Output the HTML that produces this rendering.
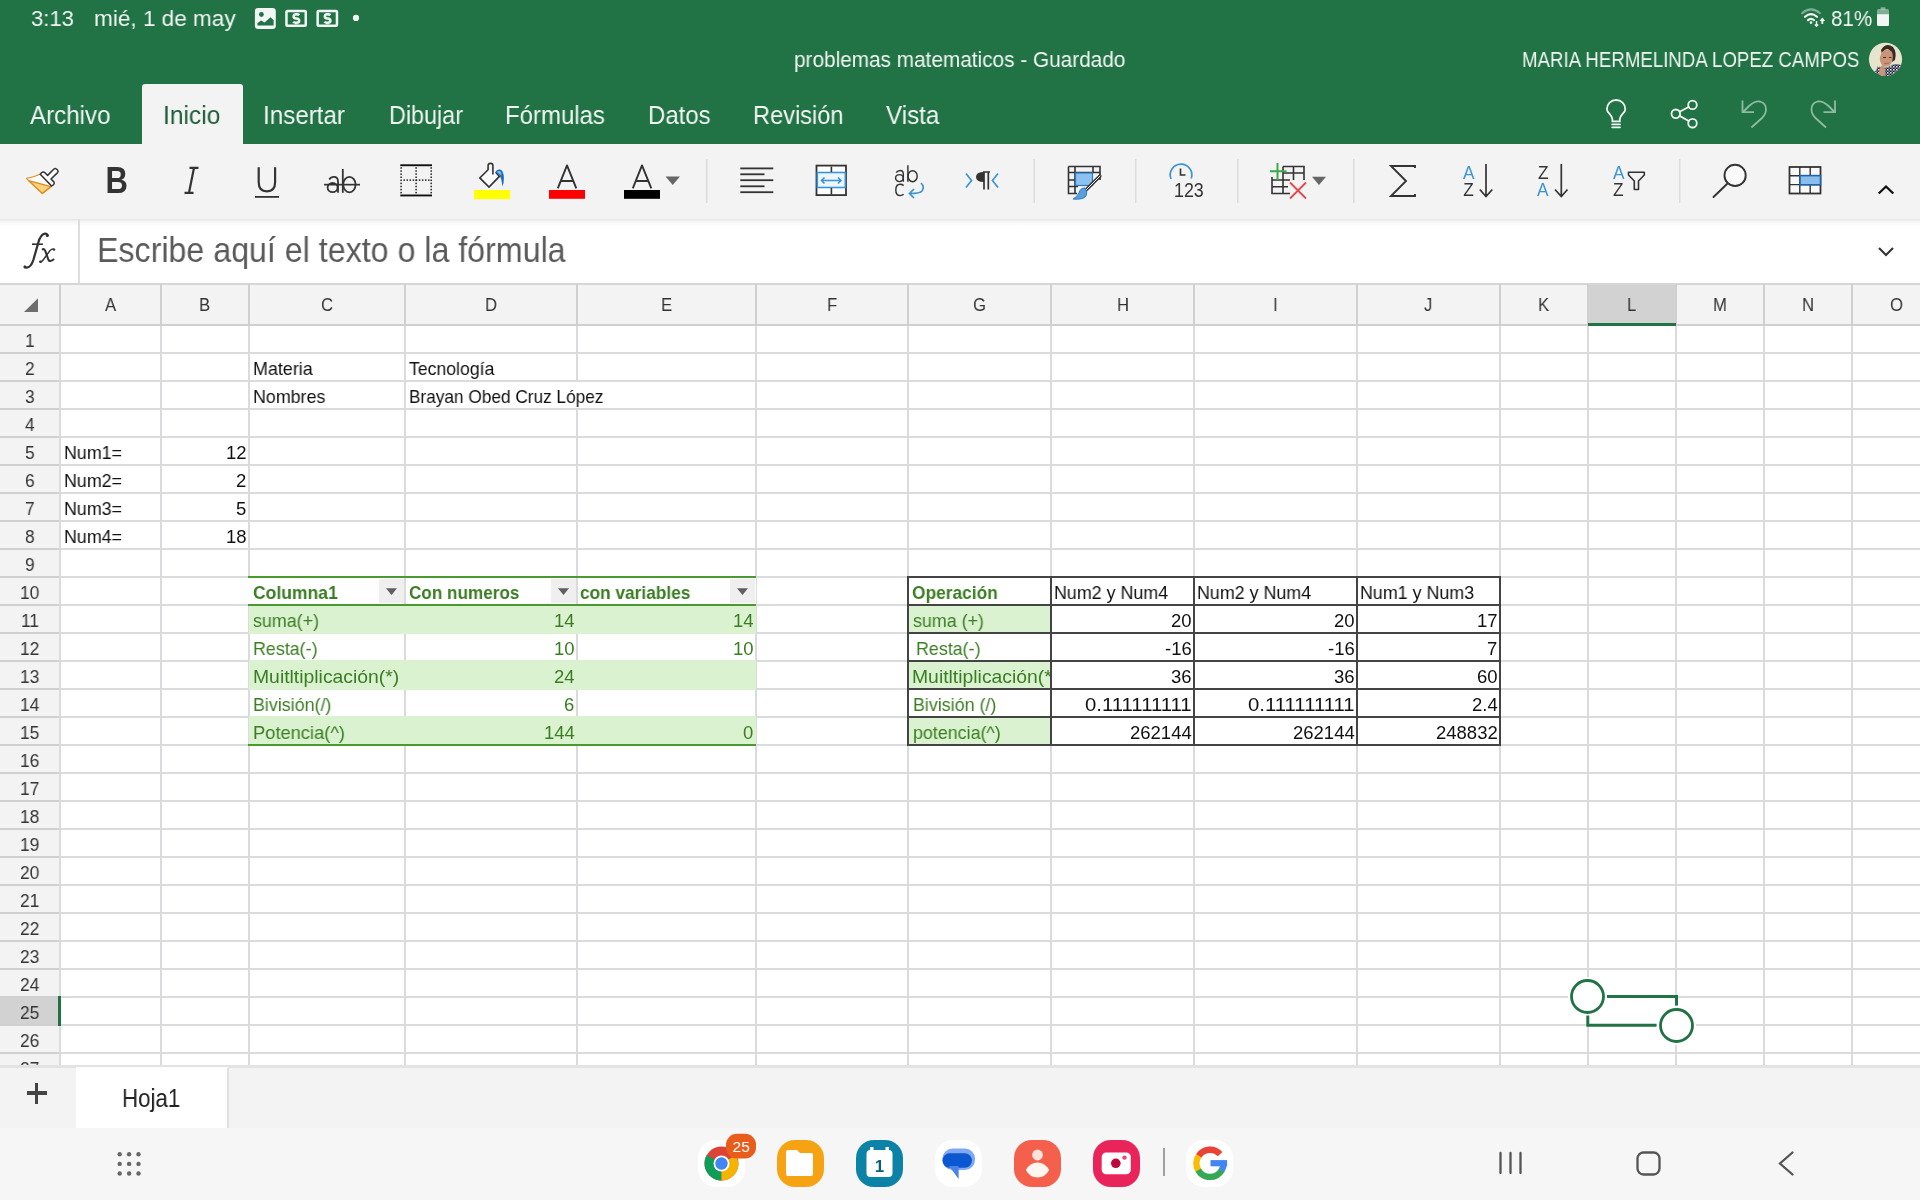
<!DOCTYPE html>
<html><head><meta charset="utf-8"><style>
html,body{margin:0;padding:0;width:1920px;height:1200px;overflow:hidden;background:#fff;}
body{position:relative;font-family:"Liberation Sans",sans-serif;}
.r,.t{position:absolute;}
.t{white-space:nowrap;transform-origin:0 0;will-change:transform;}
svg{will-change:transform;}
</style></head><body>
<div class="r" style="left:0px;top:0px;width:1920px;height:144px;background:#217346;"></div>
<div class="t" style="left:30.70px;top:7.48px;font-size:22.7px;line-height:22.7px;color:#f2f7f3;transform:scaleX(0.9717);">3:13</div>
<div class="t" style="left:93.80px;top:7.48px;font-size:22.7px;line-height:22.7px;color:#f2f7f3;transform:scaleX(0.9940);">mié, 1 de may</div>
<svg class="r" style="left:250px;top:4px" width="120" height="30" viewBox="250 4 120 30">
<rect x="254.9" y="7.9" width="20.9" height="21" rx="3.2" fill="#f2f7f3"/>
<circle cx="261.4" cy="14.5" r="2.4" fill="#217346"/>
<path d="M257.4 25.4 V23.2 L261 20.6 L264.6 22.5 L270.5 17.3 L273.6 20.3 V25.4 Z" fill="#217346"/>
<rect x="286.45" y="11.05" width="19.3" height="14.7" rx=".8" fill="none" stroke="#f2f7f3" stroke-width="2.5"/>
<rect x="317.65" y="11.05" width="19.3" height="14.7" rx=".8" fill="none" stroke="#f2f7f3" stroke-width="2.5"/>
<g fill="none" stroke="#f2f7f3" stroke-width="2.5">
<path d="M299.3 15.2 Q298.5 14.3 296.3 14.3 Q293.6 14.3 293.6 16.4 Q293.6 18.2 296.3 18.5 Q299.2 18.8 299.2 20.7 Q299.2 22.7 296.3 22.7 Q294 22.7 293.2 21.7 M296.3 12.9 V14.3 M296.3 22.7 V24.2"/>
<path d="M330.5 15.2 Q329.7 14.3 327.5 14.3 Q324.8 14.3 324.8 16.4 Q324.8 18.2 327.5 18.5 Q330.4 18.8 330.4 20.7 Q330.4 22.7 327.5 22.7 Q325.2 22.7 324.4 21.7 M327.5 12.9 V14.3 M327.5 22.7 V24.2"/>
</g>
<circle cx="356" cy="17.9" r="3.1" fill="#f2f7f3"/>
</svg>
<svg class="r" style="left:1790px;top:0px" width="130" height="36" viewBox="1790 0 130 36">
<g fill="none" stroke-linecap="round">
<path d="M1802 13.2 Q1811 5.5 1820 13.2" stroke="#f2f7f3" stroke-opacity=".45" stroke-width="2"/>
<path d="M1805 16.8 Q1811 11.5 1817 16.8" stroke="#f2f7f3" stroke-width="2.2"/>
<path d="M1808 20.2 Q1811 17.6 1814 20.2" stroke="#f2f7f3" stroke-width="2.2"/>
</g>
<circle cx="1811" cy="22.6" r="1.3" fill="#f2f7f3"/>
<path d="M1816.5 21 V26.3 M1814.8 24.5 L1816.5 26.3 L1818.2 24.5" fill="none" stroke="#f2f7f3" stroke-width="1.4"/>
<path d="M1822.3 24 V19 M1820.4 21 L1822.3 18.8 L1824.2 21" fill="none" stroke="#f2f7f3" stroke-width="1.8"/>
<rect x="1877" y="9" width="12" height="17" rx="1.6" fill="#f2f7f3" fill-opacity=".45"/>
<rect x="1880.5" y="7.2" width="5" height="2.5" rx=".8" fill="#f2f7f3" fill-opacity=".45"/>
<path d="M1877 14.2 H1889 V24.4 Q1889 26 1887.4 26 H1878.6 Q1877 26 1877 24.4Z" fill="#f2f7f3"/>
</svg>
<div class="t" style="left:1830.80px;top:7.38px;font-size:22.7px;line-height:22.7px;color:#f2f7f3;transform:scaleX(0.9075);">81%</div>
<div class="t" style="left:793.60px;top:48.50px;font-size:21.8px;line-height:21.8px;color:#f2f7f3;transform:scaleX(0.9531);">problemas matematicos - Guardado</div>
<div class="t" style="left:1521.50px;top:49.78px;font-size:21.4px;line-height:21.4px;color:#f2f7f3;transform:scaleX(0.8733);">MARIA HERMELINDA LOPEZ CAMPOS</div>
<svg class="r" style="left:1868px;top:42px" width="36" height="36" viewBox="1868 42 36 36">
<defs><clipPath id="av"><circle cx="1885.5" cy="59.3" r="16.6"/></clipPath>
<pattern id="shirt" width="3" height="3" patternUnits="userSpaceOnUse"><rect width="3" height="3" fill="#1f2338"/><rect x="0" y="0" width="1.5" height="1.5" fill="#e8ecf2"/><rect x="1.5" y="1.5" width="1.2" height="1.2" fill="#c9d0de"/></pattern></defs>
<g clip-path="url(#av)">
<rect x="1868" y="42" width="36" height="36" fill="#e4e5cc"/>
<path d="M1881 50 Q1886 42 1893 47 Q1897 52 1895 60 L1892 62 Q1893 52 1888 49 Q1884 49 1882 54Z" fill="#3a2a22"/>
<path d="M1882 52 Q1888 47 1892 52 Q1894 58 1891 64 Q1887 68 1883 66 Q1879 62 1880 57Z" fill="#c99478"/>
<path d="M1883 57.5 H1886 M1889 57.5 H1891.5" stroke="#4a2e25" stroke-width="1.2"/>
<path d="M1884 63 Q1886.5 64.5 1889 63" stroke="#b0605a" stroke-width="1" fill="none"/>
<path d="M1872 78 L1878 66 Q1884 69 1890 66 Q1896 62 1903 66 L1904 78Z" fill="url(#shirt)"/>
<path d="M1879 78 Q1878 70 1882 65 Q1886 66 1885 78Z" fill="#c99478"/>
</g></svg>
<div class="r" style="left:142px;top:84px;width:101px;height:60px;background:#f3f3f3;border-radius:3px 3px 0 0;"></div>
<div class="t" style="left:29.50px;top:102.61px;font-size:25.8px;line-height:25.8px;color:#f2f7f3;transform:scaleX(0.9356);">Archivo</div>
<div class="t" style="left:162.75px;top:102.61px;font-size:25.8px;line-height:25.8px;color:#1d5c37;transform:scaleX(0.9503);">Inicio</div>
<div class="t" style="left:263.00px;top:102.61px;font-size:25.8px;line-height:25.8px;color:#f2f7f3;transform:scaleX(0.9376);">Insertar</div>
<div class="t" style="left:388.50px;top:102.61px;font-size:25.8px;line-height:25.8px;color:#f2f7f3;transform:scaleX(0.9048);">Dibujar</div>
<div class="t" style="left:505.00px;top:102.61px;font-size:25.8px;line-height:25.8px;color:#f2f7f3;transform:scaleX(0.9295);">Fórmulas</div>
<div class="t" style="left:647.50px;top:102.61px;font-size:25.8px;line-height:25.8px;color:#f2f7f3;transform:scaleX(0.9282);">Datos</div>
<div class="t" style="left:752.50px;top:102.61px;font-size:25.8px;line-height:25.8px;color:#f2f7f3;transform:scaleX(0.9147);">Revisión</div>
<div class="t" style="left:885.50px;top:102.61px;font-size:25.8px;line-height:25.8px;color:#f2f7f3;transform:scaleX(0.9383);">Vista</div>
<svg class="r" style="left:1590px;top:85px" width="260" height="55" viewBox="1590 85 260 55">
<g fill="none" stroke="#f2f7f3" stroke-width="1.8" stroke-linecap="round">
<path d="M1612.4 121.3 V119.2 Q1612.1 116.6 1609.6 113.9 Q1606.9 111.2 1606.9 109.2 A9.2 9.2 0 0 1 1625.3 109.2 Q1625.3 111.2 1622.6 113.9 Q1620.1 116.6 1619.8 119.2 V121.3 Z"/>
<path d="M1612.2 124.4 H1620 M1612.2 127.3 H1620"/>
<circle cx="1692.5" cy="104.9" r="4.3"/><circle cx="1675.8" cy="113.8" r="4.3"/><circle cx="1692.5" cy="123.2" r="4.3"/>
<path d="M1679.6 111.7 L1688.7 107 M1679.6 115.9 L1688.7 121"/>
</g>
<g fill="none" stroke="#8fbba0" stroke-width="1.8">
<path d="M1742.5 100.6 V112.2 H1754"/>
<path d="M1743 112 L1749 106 Q1755 100.6 1760 101.5 Q1766 103 1766 109.5 Q1766 114 1762 118 L1751.4 127.5"/>
<path d="M1835 100.6 V112.2 H1823.5"/>
<path d="M1834.5 112 L1828.5 106 Q1822.5 100.6 1817.5 101.5 Q1811.5 103 1811.5 109.5 Q1811.5 114 1815.5 118 L1826 127.5"/>
</g></svg>
<div class="r" style="left:0px;top:144px;width:1920px;height:75px;background:#f3f3f3;"></div>
<div class="r" style="left:0px;top:219px;width:1920px;height:65px;background:#ffffff;"></div>
<div class="r" style="left:0px;top:219px;width:1920px;height:7px;background:linear-gradient(#e4e4e4,#f6f6f6 40%,#ffffff);"></div>
<div class="r" style="left:78px;top:219px;width:2px;height:65px;background:#dedede;"></div>
<svg class="r" style="left:0px;top:144px" width="1920" height="76" viewBox="0 144 1920 76">
<!-- format painter -->
<path d="M26.5 178.3 Q35 176.8 40.3 174 L51.7 185.9 L42.4 193.4 Z" fill="#fff" stroke="#e08a1e" stroke-width="1.1" stroke-linejoin="round"/>
<path d="M28.5 180.6 L51 186.6 L42.4 193.4 Z" fill="#fcd27e" stroke="#e08a1e" stroke-width="1.4" stroke-linejoin="round"/>
<path d="M40.3 174.2 Q41.3 172.4 42.9 172 Q44 171.9 44.9 172.8 L47.6 175.4 L54 169 Q55.2 168 56.4 169 L57.7 170.3 Q58.6 171.5 57.6 172.6 L51 179 L53.6 181.6 Q54.7 182.8 53.9 184.2 Q53 185.6 51.6 185.9 Z" fill="#fff" stroke="#333333" stroke-width="1.5" stroke-linejoin="round"/>
<!-- B I U ab -->
<text x="105.6" y="193" font-family="Liberation Sans" font-weight="bold" font-size="37.4" fill="#333333" transform="translate(105.6 0) scale(0.83 1) translate(-105.6 0)">B</text>
<path d="M189.5 167.8 H198.5 M184.5 192.8 H193.5 M194 167.8 L189 192.8" fill="none" stroke="#333333" stroke-width="2.2"/>
<path d="M258.7 167.3 V182.3 Q258.7 191.3 266.9 191.3 Q275.1 191.3 275.1 182.3 V167.3" fill="none" stroke="#333333" stroke-width="2.2"/>
<rect x="255" y="196" width="24" height="1.8" fill="#333333"/>
<g fill="none" stroke="#333333" stroke-width="1.8">
<path d="M329.2 179.5 Q330.8 176.9 334 176.9 Q338 176.9 338 181.5 V192.8"/>
<ellipse cx="332.6" cy="187.6" rx="5" ry="4.6"/>
<path d="M342.8 169 V192.8"/>
<ellipse cx="349.4" cy="184.6" rx="6.2" ry="7.7"/>
</g>
<rect x="324.1" y="183.8" width="35.9" height="1.7" fill="#333333"/>
<!-- borders -->
<rect x="400.3" y="164.3" width="31.7" height="1.9" fill="#111"/>
<rect x="400.3" y="194.5" width="31.7" height="1.9" fill="#111"/>
<g fill="#222"><rect x="400.35" y="167.25" width="1.5" height="1.5"/><rect x="400.35" y="170.33" width="1.5" height="1.5"/><rect x="400.35" y="173.41" width="1.5" height="1.5"/><rect x="400.35" y="176.49" width="1.5" height="1.5"/><rect x="400.35" y="179.57" width="1.5" height="1.5"/><rect x="400.35" y="182.65" width="1.5" height="1.5"/><rect x="400.35" y="185.73" width="1.5" height="1.5"/><rect x="400.35" y="188.81" width="1.5" height="1.5"/><rect x="400.35" y="191.89" width="1.5" height="1.5"/><rect x="415.35" y="167.25" width="1.5" height="1.5"/><rect x="415.35" y="170.33" width="1.5" height="1.5"/><rect x="415.35" y="173.41" width="1.5" height="1.5"/><rect x="415.35" y="176.49" width="1.5" height="1.5"/><rect x="415.35" y="179.57" width="1.5" height="1.5"/><rect x="415.35" y="182.65" width="1.5" height="1.5"/><rect x="415.35" y="185.73" width="1.5" height="1.5"/><rect x="415.35" y="188.81" width="1.5" height="1.5"/><rect x="415.35" y="191.89" width="1.5" height="1.5"/><rect x="430.45" y="167.25" width="1.5" height="1.5"/><rect x="430.45" y="170.33" width="1.5" height="1.5"/><rect x="430.45" y="173.41" width="1.5" height="1.5"/><rect x="430.45" y="176.49" width="1.5" height="1.5"/><rect x="430.45" y="179.57" width="1.5" height="1.5"/><rect x="430.45" y="182.65" width="1.5" height="1.5"/><rect x="430.45" y="185.73" width="1.5" height="1.5"/><rect x="430.45" y="188.81" width="1.5" height="1.5"/><rect x="430.45" y="191.89" width="1.5" height="1.5"/><rect x="403.43" y="179.35" width="1.5" height="1.5"/><rect x="406.51" y="179.35" width="1.5" height="1.5"/><rect x="409.59" y="179.35" width="1.5" height="1.5"/><rect x="412.67" y="179.35" width="1.5" height="1.5"/><rect x="415.75" y="179.35" width="1.5" height="1.5"/><rect x="418.83" y="179.35" width="1.5" height="1.5"/><rect x="421.91" y="179.35" width="1.5" height="1.5"/><rect x="424.99" y="179.35" width="1.5" height="1.5"/><rect x="428.07" y="179.35" width="1.5" height="1.5"/></g>
<!-- fill color -->
<path d="M488.1 169.8 L479.8 177.9 L489 187 L499.4 176.4 L495.6 172.3" fill="#fafafa" stroke="#333333" stroke-width="1.6" stroke-linejoin="miter"/>
<path d="M488.1 170 V165.6 Q488.1 163.4 490.5 163.4 Q492.9 163.4 492.9 165.6 V174.6" fill="none" stroke="#333333" stroke-width="1.6"/>
<path d="M495.3 172 Q497.2 168.8 500.2 169.6 Q503.6 170.8 503.9 178 Q504 183 502.4 186.5 Q501.6 178.5 499.6 175.5 Z" fill="#1e6cb8"/>
<path d="M496.8 172 Q498.8 170.6 500.5 171.4 Q502 172.5 501.3 175.6 Q499.8 174 496.8 172Z" fill="#7cbcf2"/>
<rect x="474" y="190" width="36.2" height="9.2" fill="#ffff00"/>
<!-- font color A -->
<path d="M557.8 188.3 L567 165.4 L576.3 188.3 M560.5 181 H573.5" fill="none" stroke="#333333" stroke-width="1.9" stroke-linejoin="round"/>
<rect x="549" y="190" width="36" height="8.8" fill="#ff0000"/>
<path d="M632.8 188.3 L642 165.4 L651.3 188.3 M635.5 181 H648.5" fill="none" stroke="#333333" stroke-width="1.9" stroke-linejoin="round"/>
<rect x="624" y="190" width="36" height="8.8" fill="#000"/>
<path d="M665.5 176.6 H680 L672.75 185 Z" fill="#666"/>
<!-- separators -->
<g fill="#dcdcdc">
<rect x="706" y="159" width="1.5" height="44"/><rect x="1033.5" y="159" width="1.5" height="44"/>
<rect x="1135" y="159" width="1.5" height="44"/><rect x="1237" y="159" width="1.5" height="44"/>
<rect x="1353" y="159" width="1.5" height="44"/><rect x="1679" y="159" width="1.5" height="44"/>
</g>
<!-- align left -->
<g fill="#333333">
<rect x="740.3" y="167.5" width="33" height="1.8"/><rect x="740.3" y="173.4" width="24.2" height="1.8"/>
<rect x="740.3" y="179.3" width="33" height="1.8"/><rect x="740.3" y="185.4" width="24.2" height="1.8"/>
<rect x="740.3" y="191.3" width="33" height="1.8"/>
</g>
<!-- merge -->
<rect x="816.5" y="165.6" width="29.5" height="29.5" fill="#fff" stroke="#333333" stroke-width="1.8"/>
<rect x="817.3" y="172.5" width="28" height="15" fill="#eef6fd" stroke="#3a94d6" stroke-width="1.6"/>
<path d="M831.4 166.5 V172 M831.4 188 V194.5" stroke="#333333" stroke-width="1.6"/>
<path d="M821.5 180.5 H841 M824.5 177.5 L821.5 180.5 L824.5 183.5 M838 177.5 L841 180.5 L838 183.5" fill="none" stroke="#3a94d6" stroke-width="1.6"/>
<!-- wrap -->
<g fill="none" stroke="#333333" stroke-width="1.45">
<path d="M896.2 172.6 Q897.6 170.4 900.2 170.4 Q903.3 170.4 903.3 174 V181.7"/>
<ellipse cx="899.4" cy="178.1" rx="3.8" ry="3.5"/>
<path d="M907.9 165.2 V181.7"/>
<ellipse cx="912.6" cy="176.2" rx="4.6" ry="5.5"/>
<path d="M903.6 185.6 Q902.2 184.3 900.2 184.3 Q895.8 184.3 895.8 190 Q895.8 195.6 900.2 195.6 Q902.2 195.6 903.6 194.3"/>
</g>
<path d="M921 183 Q925 187 922 191 Q920 193.5 910 193.5 M914 189 L909.5 193.5 L914 198" fill="none" stroke="#3a94d6" stroke-width="1.7"/>
<!-- rtl -->
<path d="M966 173.5 L971.5 180.5 L966 187.5 M998 173.5 L992.5 180.5 L998 187.5" fill="none" stroke="#3a94d6" stroke-width="1.7"/>
<path d="M983 172 H990 M984 172 V189.5 M988.3 172 V189.5" fill="none" stroke="#333333" stroke-width="1.7"/>
<path d="M984 172 Q976 172 976 177 Q976 182 984 182Z" fill="#333333"/>
<!-- conditional formatting -->
<g fill="none" stroke="#333333" stroke-width="1.6">
<path d="M1068.5 166.5 H1100 V180 M1068.5 166.5 V193.5 H1077 M1068.5 172.5 H1100 M1068.5 180 H1093 M1068.5 186.5 H1078 M1075 166.5 V193.5 M1093 166.5 V172.5"/>
</g>
<rect x="1075.5" y="173" width="17" height="12.5" fill="#8cc1f0" stroke="#2a7bc4" stroke-width="1.2"/>
<path d="M1100 176 L1086 190" stroke="#333333" stroke-width="3.2" stroke-linecap="round"/>
<path d="M1100 176 L1086 190" stroke="#f3f3f3" stroke-width="1" stroke-linecap="round"/>
<path d="M1085 188 Q1080 188 1079 193 Q1077 197 1073 199 Q1083 200 1086 196 Q1088 192 1085 188Z" fill="#5a9fdc" stroke="#2a7bc4" stroke-width="1"/>
<!-- number format -->
<path d="M1171 179 A10.8 10.8 0 1 1 1191.2 178.5" fill="none" stroke="#3a94d6" stroke-width="1.7"/>
<path d="M1180.5 168.5 V175 H1185.5" fill="none" stroke="#333333" stroke-width="1.6"/>
<text x="1174" y="197" font-family="Liberation Sans" font-size="21" fill="#333333" transform="translate(1174 0) scale(0.85 1) translate(-1174 0)">123</text>
<!-- insert delete -->
<g fill="none" stroke="#333333" stroke-width="1.6">
<path d="M1283 166.5 H1304 V180 M1272 177 V193.5 H1290 M1272 180 H1290 M1283 166.5 V193.5 M1293.5 166.5 V180 M1283 173 H1304 M1272 186.8 H1288"/>
</g>
<path d="M1277.5 163 V180 M1270 171.3 H1286.5" stroke="#3ba94c" stroke-width="2"/>
<path d="M1290 182.5 L1306 198.5 M1306 182.5 L1290 198.5" stroke="#e04a4a" stroke-width="1.8"/>
<path d="M1312 176.7 H1326 L1319 185 Z" fill="#666"/>
<!-- sigma -->
<path d="M1415 168 V166 H1391 L1406 181 L1391 196 H1415 V194" fill="none" stroke="#333333" stroke-width="1.9"/>
<!-- sort AZ -->
<text x="1463" y="179" font-family="Liberation Sans" font-size="18" fill="#3a94d6" transform="translate(1463 0) scale(0.96 1) translate(-1463 0)">A</text>
<text x="1463.3" y="196" font-family="Liberation Sans" font-size="18" fill="#333333" transform="translate(1463 0) scale(0.96 1) translate(-1463 0)">Z</text>
<path d="M1486 164 V196 M1479.8 189.5 L1486 196.5 L1492.3 189.5" fill="none" stroke="#333333" stroke-width="1.7"/>
<text x="1538" y="179" font-family="Liberation Sans" font-size="18" fill="#333333" transform="translate(1538 0) scale(0.96 1) translate(-1538 0)">Z</text>
<text x="1537" y="196" font-family="Liberation Sans" font-size="18" fill="#3a94d6" transform="translate(1537 0) scale(0.96 1) translate(-1537 0)">A</text>
<path d="M1561.3 164 V196 M1555 189.5 L1561.3 196.5 L1567.5 189.5" fill="none" stroke="#333333" stroke-width="1.7"/>
<text x="1613" y="179" font-family="Liberation Sans" font-size="18" fill="#3a94d6" transform="translate(1613 0) scale(0.96 1) translate(-1613 0)">A</text>
<text x="1613" y="196" font-family="Liberation Sans" font-size="18" fill="#333333" transform="translate(1613 0) scale(0.96 1) translate(-1613 0)">Z</text>
<path d="M1628.5 172.3 H1644.3 V175 L1638.5 181 V189.5 H1634.3 V181 L1628.5 175 Z" fill="none" stroke="#333333" stroke-width="1.6" stroke-linejoin="round"/>
<!-- find -->
<circle cx="1735.1" cy="175.4" r="10.6" fill="#fafafa" stroke="#333333" stroke-width="1.9"/>
<path d="M1727.5 183.5 L1713.5 197" stroke="#333333" stroke-width="1.9" stroke-linecap="round"/>
<!-- table -->
<rect x="1789.5" y="167" width="31" height="26.5" fill="#fafafa" stroke="#333333" stroke-width="1.8"/>
<path d="M1799.8 167 V193.5 M1810.2 167 V193.5 M1789.5 175.8 H1820.5 M1789.5 184.6 H1820.5" stroke="#333333" stroke-width="1.4"/>
<rect x="1800" y="175.6" width="20.5" height="9.2" fill="#88bdec" stroke="#1f64ad" stroke-width="1.6"/>
<!-- collapse -->
<path d="M1878.7 193.5 L1886 186.5 L1893.3 193.5" fill="none" stroke="#111" stroke-width="2.3"/>
</svg>
<svg class="r" style="left:0px;top:220px" width="80" height="64" viewBox="0 220 80 64">
<path d="M47.5 235.5 Q47 233.3 44.8 233.6 Q40.5 234.3 38.2 243 L33.5 259.5 Q31 267.5 26.8 267.6 Q25.2 267.6 24.8 266.6" fill="none" stroke="#333" stroke-width="2.3" stroke-linecap="round"/>
<circle cx="47.3" cy="235.6" r="1.5" fill="#333"/><circle cx="25" cy="267" r="1.5" fill="#333"/>
<path d="M32 244.2 H42.9" stroke="#333" stroke-width="1.6"/>
<path d="M42.8 249.3 Q44.5 248.5 45.5 251.5 L48.3 259.5 Q49.5 262.6 53.5 259.5" fill="none" stroke="#333" stroke-width="2.1" stroke-linecap="round"/>
<path d="M54.5 249.5 Q52.5 248.3 50 250.5 L43.5 259.5 Q41.5 262.5 39.8 261.6" fill="none" stroke="#333" stroke-width="1.4" stroke-linecap="round"/>
<circle cx="54" cy="249.6" r="1.2" fill="#333"/><circle cx="40.6" cy="261.7" r="1.3" fill="#333"/>
</svg>
<div class="t" style="left:97.10px;top:233.31px;font-size:34.6px;line-height:34.6px;color:#5a5a5a;transform:scaleX(0.9306);">Escribe aquí el texto o la fórmula</div>
<svg class="r" style="left:1870px;top:240px" width="32" height="24" viewBox="1870 240 32 24">
<path d="M1879 248 L1886 255 L1893 248" fill="none" stroke="#333" stroke-width="2.1"/></svg>
<div class="r" style="left:0px;top:284px;width:1920px;height:41px;background:#f3f3f3;"></div>
<div class="r" style="left:0px;top:325px;width:60px;height:740px;background:#f3f3f3;"></div>
<div class="r" style="left:60px;top:326px;width:1860px;height:739px;background:#ffffff;"></div>
<div class="r" style="left:1588px;top:284px;width:88px;height:41px;background:#d2d2d2;"></div>
<div class="r" style="left:0px;top:996px;width:60px;height:30px;background:#d2d2d2;"></div>
<div class="r" style="left:0px;top:283px;width:1920px;height:2px;background:#d6d6d6;"></div>
<div class="r" style="left:0px;top:324px;width:1920px;height:2px;background:#cfcfcf;"></div>
<div class="r" style="left:0px;top:352px;width:60px;height:2px;background:#d0d0d0;"></div>
<div class="r" style="left:60px;top:352px;width:1860px;height:2px;background:#dadbdc;"></div>
<div class="r" style="left:0px;top:380px;width:60px;height:2px;background:#d0d0d0;"></div>
<div class="r" style="left:60px;top:380px;width:1860px;height:2px;background:#dadbdc;"></div>
<div class="r" style="left:0px;top:408px;width:60px;height:2px;background:#d0d0d0;"></div>
<div class="r" style="left:60px;top:408px;width:1860px;height:2px;background:#dadbdc;"></div>
<div class="r" style="left:0px;top:436px;width:60px;height:2px;background:#d0d0d0;"></div>
<div class="r" style="left:60px;top:436px;width:1860px;height:2px;background:#dadbdc;"></div>
<div class="r" style="left:0px;top:464px;width:60px;height:2px;background:#d0d0d0;"></div>
<div class="r" style="left:60px;top:464px;width:1860px;height:2px;background:#dadbdc;"></div>
<div class="r" style="left:0px;top:492px;width:60px;height:2px;background:#d0d0d0;"></div>
<div class="r" style="left:60px;top:492px;width:1860px;height:2px;background:#dadbdc;"></div>
<div class="r" style="left:0px;top:520px;width:60px;height:2px;background:#d0d0d0;"></div>
<div class="r" style="left:60px;top:520px;width:1860px;height:2px;background:#dadbdc;"></div>
<div class="r" style="left:0px;top:548px;width:60px;height:2px;background:#d0d0d0;"></div>
<div class="r" style="left:60px;top:548px;width:1860px;height:2px;background:#dadbdc;"></div>
<div class="r" style="left:0px;top:576px;width:60px;height:2px;background:#d0d0d0;"></div>
<div class="r" style="left:60px;top:576px;width:1860px;height:2px;background:#dadbdc;"></div>
<div class="r" style="left:0px;top:604px;width:60px;height:2px;background:#d0d0d0;"></div>
<div class="r" style="left:60px;top:604px;width:1860px;height:2px;background:#dadbdc;"></div>
<div class="r" style="left:0px;top:632px;width:60px;height:2px;background:#d0d0d0;"></div>
<div class="r" style="left:60px;top:632px;width:1860px;height:2px;background:#dadbdc;"></div>
<div class="r" style="left:0px;top:660px;width:60px;height:2px;background:#d0d0d0;"></div>
<div class="r" style="left:60px;top:660px;width:1860px;height:2px;background:#dadbdc;"></div>
<div class="r" style="left:0px;top:688px;width:60px;height:2px;background:#d0d0d0;"></div>
<div class="r" style="left:60px;top:688px;width:1860px;height:2px;background:#dadbdc;"></div>
<div class="r" style="left:0px;top:716px;width:60px;height:2px;background:#d0d0d0;"></div>
<div class="r" style="left:60px;top:716px;width:1860px;height:2px;background:#dadbdc;"></div>
<div class="r" style="left:0px;top:744px;width:60px;height:2px;background:#d0d0d0;"></div>
<div class="r" style="left:60px;top:744px;width:1860px;height:2px;background:#dadbdc;"></div>
<div class="r" style="left:0px;top:772px;width:60px;height:2px;background:#d0d0d0;"></div>
<div class="r" style="left:60px;top:772px;width:1860px;height:2px;background:#dadbdc;"></div>
<div class="r" style="left:0px;top:800px;width:60px;height:2px;background:#d0d0d0;"></div>
<div class="r" style="left:60px;top:800px;width:1860px;height:2px;background:#dadbdc;"></div>
<div class="r" style="left:0px;top:828px;width:60px;height:2px;background:#d0d0d0;"></div>
<div class="r" style="left:60px;top:828px;width:1860px;height:2px;background:#dadbdc;"></div>
<div class="r" style="left:0px;top:856px;width:60px;height:2px;background:#d0d0d0;"></div>
<div class="r" style="left:60px;top:856px;width:1860px;height:2px;background:#dadbdc;"></div>
<div class="r" style="left:0px;top:884px;width:60px;height:2px;background:#d0d0d0;"></div>
<div class="r" style="left:60px;top:884px;width:1860px;height:2px;background:#dadbdc;"></div>
<div class="r" style="left:0px;top:912px;width:60px;height:2px;background:#d0d0d0;"></div>
<div class="r" style="left:60px;top:912px;width:1860px;height:2px;background:#dadbdc;"></div>
<div class="r" style="left:0px;top:940px;width:60px;height:2px;background:#d0d0d0;"></div>
<div class="r" style="left:60px;top:940px;width:1860px;height:2px;background:#dadbdc;"></div>
<div class="r" style="left:0px;top:968px;width:60px;height:2px;background:#d0d0d0;"></div>
<div class="r" style="left:60px;top:968px;width:1860px;height:2px;background:#dadbdc;"></div>
<div class="r" style="left:0px;top:996px;width:60px;height:2px;background:#d0d0d0;"></div>
<div class="r" style="left:60px;top:996px;width:1860px;height:2px;background:#dadbdc;"></div>
<div class="r" style="left:0px;top:1024px;width:60px;height:2px;background:#d0d0d0;"></div>
<div class="r" style="left:60px;top:1024px;width:1860px;height:2px;background:#dadbdc;"></div>
<div class="r" style="left:0px;top:1052px;width:60px;height:2px;background:#d0d0d0;"></div>
<div class="r" style="left:60px;top:1052px;width:1860px;height:2px;background:#dadbdc;"></div>
<div class="r" style="left:59px;top:284px;width:2px;height:41px;background:#cfcfcf;"></div>
<div class="r" style="left:59px;top:326px;width:2px;height:739px;background:#dadbdc;"></div>
<div class="r" style="left:160px;top:284px;width:2px;height:41px;background:#cfcfcf;"></div>
<div class="r" style="left:160px;top:326px;width:2px;height:739px;background:#dadbdc;"></div>
<div class="r" style="left:248px;top:284px;width:2px;height:41px;background:#cfcfcf;"></div>
<div class="r" style="left:248px;top:326px;width:2px;height:739px;background:#dadbdc;"></div>
<div class="r" style="left:404px;top:284px;width:2px;height:41px;background:#cfcfcf;"></div>
<div class="r" style="left:404px;top:326px;width:2px;height:739px;background:#dadbdc;"></div>
<div class="r" style="left:576px;top:284px;width:2px;height:41px;background:#cfcfcf;"></div>
<div class="r" style="left:576px;top:326px;width:2px;height:739px;background:#dadbdc;"></div>
<div class="r" style="left:755px;top:284px;width:2px;height:41px;background:#cfcfcf;"></div>
<div class="r" style="left:755px;top:326px;width:2px;height:739px;background:#dadbdc;"></div>
<div class="r" style="left:907px;top:284px;width:2px;height:41px;background:#cfcfcf;"></div>
<div class="r" style="left:907px;top:326px;width:2px;height:739px;background:#dadbdc;"></div>
<div class="r" style="left:1050px;top:284px;width:2px;height:41px;background:#cfcfcf;"></div>
<div class="r" style="left:1050px;top:326px;width:2px;height:739px;background:#dadbdc;"></div>
<div class="r" style="left:1193px;top:284px;width:2px;height:41px;background:#cfcfcf;"></div>
<div class="r" style="left:1193px;top:326px;width:2px;height:739px;background:#dadbdc;"></div>
<div class="r" style="left:1356px;top:284px;width:2px;height:41px;background:#cfcfcf;"></div>
<div class="r" style="left:1356px;top:326px;width:2px;height:739px;background:#dadbdc;"></div>
<div class="r" style="left:1499px;top:284px;width:2px;height:41px;background:#cfcfcf;"></div>
<div class="r" style="left:1499px;top:326px;width:2px;height:739px;background:#dadbdc;"></div>
<div class="r" style="left:1587px;top:284px;width:2px;height:41px;background:#cfcfcf;"></div>
<div class="r" style="left:1587px;top:326px;width:2px;height:739px;background:#dadbdc;"></div>
<div class="r" style="left:1675px;top:284px;width:2px;height:41px;background:#cfcfcf;"></div>
<div class="r" style="left:1675px;top:326px;width:2px;height:739px;background:#dadbdc;"></div>
<div class="r" style="left:1763px;top:284px;width:2px;height:41px;background:#cfcfcf;"></div>
<div class="r" style="left:1763px;top:326px;width:2px;height:739px;background:#dadbdc;"></div>
<div class="r" style="left:1851px;top:284px;width:2px;height:41px;background:#cfcfcf;"></div>
<div class="r" style="left:1851px;top:326px;width:2px;height:739px;background:#dadbdc;"></div>
<div class="t" style="left:104.92px;top:295.94px;font-size:18.5px;line-height:18.5px;color:#333;transform:scaleX(0.9000);">A</div>
<div class="t" style="left:199.46px;top:295.94px;font-size:18.5px;line-height:18.5px;color:#333;transform:scaleX(0.9000);">B</div>
<div class="t" style="left:321.01px;top:295.94px;font-size:18.5px;line-height:18.5px;color:#333;transform:scaleX(0.9000);">C</div>
<div class="t" style="left:485.01px;top:295.94px;font-size:18.5px;line-height:18.5px;color:#333;transform:scaleX(0.9000);">D</div>
<div class="t" style="left:660.96px;top:295.94px;font-size:18.5px;line-height:18.5px;color:#333;transform:scaleX(0.9000);">E</div>
<div class="t" style="left:826.92px;top:295.94px;font-size:18.5px;line-height:18.5px;color:#333;transform:scaleX(0.9000);">F</div>
<div class="t" style="left:973.01px;top:295.94px;font-size:18.5px;line-height:18.5px;color:#333;transform:scaleX(0.9000);">G</div>
<div class="t" style="left:1116.51px;top:295.94px;font-size:18.5px;line-height:18.5px;color:#333;transform:scaleX(0.9000);">H</div>
<div class="t" style="left:1273.17px;top:295.94px;font-size:18.5px;line-height:18.5px;color:#333;transform:scaleX(0.9000);">I</div>
<div class="t" style="left:1424.34px;top:295.94px;font-size:18.5px;line-height:18.5px;color:#333;transform:scaleX(0.9000);">J</div>
<div class="t" style="left:1538.46px;top:295.94px;font-size:18.5px;line-height:18.5px;color:#333;transform:scaleX(0.9000);">K</div>
<div class="t" style="left:1627.38px;top:295.94px;font-size:18.5px;line-height:18.5px;color:#333;transform:scaleX(0.9000);">L</div>
<div class="t" style="left:1713.05px;top:295.94px;font-size:18.5px;line-height:18.5px;color:#333;transform:scaleX(0.9000);">M</div>
<div class="t" style="left:1802.01px;top:295.94px;font-size:18.5px;line-height:18.5px;color:#333;transform:scaleX(0.9000);">N</div>
<div class="t" style="left:1889.51px;top:295.94px;font-size:18.5px;line-height:18.5px;color:#333;transform:scaleX(0.9000);">O</div>
<svg class="r" style="left:20px;top:294px" width="22" height="22" viewBox="20 294 22 22"><path d="M24 312 L38 298.2 V312Z" fill="#6e6e6e"/></svg>
<div class="t" style="left:25.17px;top:331.60px;font-size:18.9px;line-height:18.9px;color:#333;transform:scaleX(0.9200);">1</div>
<div class="t" style="left:25.17px;top:359.60px;font-size:18.9px;line-height:18.9px;color:#333;transform:scaleX(0.9200);">2</div>
<div class="t" style="left:25.17px;top:387.60px;font-size:18.9px;line-height:18.9px;color:#333;transform:scaleX(0.9200);">3</div>
<div class="t" style="left:25.17px;top:415.60px;font-size:18.9px;line-height:18.9px;color:#333;transform:scaleX(0.9200);">4</div>
<div class="t" style="left:25.17px;top:443.60px;font-size:18.9px;line-height:18.9px;color:#333;transform:scaleX(0.9200);">5</div>
<div class="t" style="left:25.17px;top:471.60px;font-size:18.9px;line-height:18.9px;color:#333;transform:scaleX(0.9200);">6</div>
<div class="t" style="left:25.17px;top:499.60px;font-size:18.9px;line-height:18.9px;color:#333;transform:scaleX(0.9200);">7</div>
<div class="t" style="left:25.17px;top:527.60px;font-size:18.9px;line-height:18.9px;color:#333;transform:scaleX(0.9200);">8</div>
<div class="t" style="left:25.17px;top:555.60px;font-size:18.9px;line-height:18.9px;color:#333;transform:scaleX(0.9200);">9</div>
<div class="t" style="left:20.35px;top:583.60px;font-size:18.9px;line-height:18.9px;color:#333;transform:scaleX(0.9200);">10</div>
<div class="t" style="left:20.96px;top:611.60px;font-size:18.9px;line-height:18.9px;color:#333;transform:scaleX(0.9200);">11</div>
<div class="t" style="left:20.35px;top:639.60px;font-size:18.9px;line-height:18.9px;color:#333;transform:scaleX(0.9200);">12</div>
<div class="t" style="left:20.35px;top:667.60px;font-size:18.9px;line-height:18.9px;color:#333;transform:scaleX(0.9200);">13</div>
<div class="t" style="left:20.35px;top:695.60px;font-size:18.9px;line-height:18.9px;color:#333;transform:scaleX(0.9200);">14</div>
<div class="t" style="left:20.35px;top:723.60px;font-size:18.9px;line-height:18.9px;color:#333;transform:scaleX(0.9200);">15</div>
<div class="t" style="left:20.35px;top:751.60px;font-size:18.9px;line-height:18.9px;color:#333;transform:scaleX(0.9200);">16</div>
<div class="t" style="left:20.35px;top:779.60px;font-size:18.9px;line-height:18.9px;color:#333;transform:scaleX(0.9200);">17</div>
<div class="t" style="left:20.35px;top:807.60px;font-size:18.9px;line-height:18.9px;color:#333;transform:scaleX(0.9200);">18</div>
<div class="t" style="left:20.35px;top:835.60px;font-size:18.9px;line-height:18.9px;color:#333;transform:scaleX(0.9200);">19</div>
<div class="t" style="left:20.35px;top:863.60px;font-size:18.9px;line-height:18.9px;color:#333;transform:scaleX(0.9200);">20</div>
<div class="t" style="left:20.35px;top:891.60px;font-size:18.9px;line-height:18.9px;color:#333;transform:scaleX(0.9200);">21</div>
<div class="t" style="left:20.35px;top:919.60px;font-size:18.9px;line-height:18.9px;color:#333;transform:scaleX(0.9200);">22</div>
<div class="t" style="left:20.35px;top:947.60px;font-size:18.9px;line-height:18.9px;color:#333;transform:scaleX(0.9200);">23</div>
<div class="t" style="left:20.35px;top:975.60px;font-size:18.9px;line-height:18.9px;color:#333;transform:scaleX(0.9200);">24</div>
<div class="t" style="left:20.35px;top:1003.60px;font-size:18.9px;line-height:18.9px;color:#333;transform:scaleX(0.9200);">25</div>
<div class="t" style="left:20.35px;top:1031.60px;font-size:18.9px;line-height:18.9px;color:#333;transform:scaleX(0.9200);">26</div>
<div class="t" style="left:20.35px;top:1059.60px;font-size:18.9px;line-height:18.9px;color:#333;transform:scaleX(0.9200);">27</div>
<div class="t" style="left:252.50px;top:360.04px;font-size:18.5px;line-height:18.5px;color:#111;transform:scaleX(0.9678);">Materia</div>
<div class="t" style="left:408.50px;top:360.04px;font-size:18.5px;line-height:18.5px;color:#111;transform:scaleX(0.9538);">Tecnología</div>
<div class="t" style="left:252.50px;top:388.04px;font-size:18.5px;line-height:18.5px;color:#111;transform:scaleX(0.9650);">Nombres</div>
<div class="r" style="left:575px;top:382px;width:3px;height:26px;background:#ffffff;"></div>
<div class="t" style="left:408.50px;top:388.04px;font-size:18.5px;line-height:18.5px;color:#111;transform:scaleX(0.9312);">Brayan Obed Cruz López</div>
<div class="t" style="left:63.50px;top:444.04px;font-size:18.5px;line-height:18.5px;color:#111;transform:scaleX(0.9650);">Num1=</div>
<div class="t" style="left:225.97px;top:444.04px;font-size:18.5px;line-height:18.5px;color:#111;">12</div>
<div class="t" style="left:63.50px;top:472.04px;font-size:18.5px;line-height:18.5px;color:#111;transform:scaleX(0.9650);">Num2=</div>
<div class="t" style="left:236.23px;top:472.04px;font-size:18.5px;line-height:18.5px;color:#111;">2</div>
<div class="t" style="left:63.50px;top:500.04px;font-size:18.5px;line-height:18.5px;color:#111;transform:scaleX(0.9650);">Num3=</div>
<div class="t" style="left:236.23px;top:500.04px;font-size:18.5px;line-height:18.5px;color:#111;">5</div>
<div class="t" style="left:63.50px;top:528.04px;font-size:18.5px;line-height:18.5px;color:#111;transform:scaleX(0.9650);">Num4=</div>
<div class="t" style="left:225.97px;top:528.04px;font-size:18.5px;line-height:18.5px;color:#111;">18</div>
<div class="r" style="left:248px;top:578px;width:508px;height:26px;background:#ffffff;"></div>
<div class="r" style="left:249px;top:606px;width:507px;height:26px;background:#daf2d0;"></div>
<div class="r" style="left:249px;top:662px;width:507px;height:26px;background:#daf2d0;"></div>
<div class="r" style="left:249px;top:718px;width:507px;height:26px;background:#daf2d0;"></div>
<div class="r" style="left:249px;top:632px;width:507px;height:2px;background:#ffffff;"></div>
<div class="r" style="left:249px;top:688px;width:507px;height:2px;background:#ffffff;"></div>
<div class="r" style="left:249px;top:604px;width:507px;height:2px;background:#4a9a30;"></div>
<div class="r" style="left:249px;top:660px;width:507px;height:2px;background:#daf2d0;"></div>
<div class="r" style="left:249px;top:716px;width:507px;height:2px;background:#daf2d0;"></div>
<div class="r" style="left:249px;top:632px;width:507px;height:2px;background:#daf2d0;"></div>
<div class="r" style="left:249px;top:688px;width:507px;height:2px;background:#daf2d0;"></div>
<div class="r" style="left:248px;top:576px;width:508px;height:2px;background:#4a9a30;"></div>
<div class="r" style="left:248px;top:604px;width:508px;height:2px;background:#4a9a30;"></div>
<div class="r" style="left:248px;top:744px;width:508px;height:2px;background:#4a9a30;"></div>
<div class="r" style="left:404px;top:578px;width:2px;height:26px;background:#dadbdc;"></div>
<div class="r" style="left:576px;top:578px;width:2px;height:26px;background:#dadbdc;"></div>
<div class="r" style="left:404px;top:634px;width:2px;height:26px;background:#dadbdc;"></div>
<div class="r" style="left:576px;top:634px;width:2px;height:26px;background:#dadbdc;"></div>
<div class="r" style="left:404px;top:690px;width:2px;height:26px;background:#dadbdc;"></div>
<div class="r" style="left:576px;top:690px;width:2px;height:26px;background:#dadbdc;"></div>
<div class="r" style="left:379px;top:579px;width:25px;height:24px;background:#efefef;"></div>
<svg class="r" style="left:385px;top:587px" width="13" height="9" viewBox="0 0 13 9"><path d="M1 1.3 H12 L6.5 8 Z" fill="#5f5f5f"/></svg>
<div class="r" style="left:551px;top:579px;width:25px;height:24px;background:#efefef;"></div>
<svg class="r" style="left:557px;top:587px" width="13" height="9" viewBox="0 0 13 9"><path d="M1 1.3 H12 L6.5 8 Z" fill="#5f5f5f"/></svg>
<div class="r" style="left:730px;top:579px;width:25px;height:24px;background:#efefef;"></div>
<svg class="r" style="left:736px;top:587px" width="13" height="9" viewBox="0 0 13 9"><path d="M1 1.3 H12 L6.5 8 Z" fill="#5f5f5f"/></svg>
<div class="t" style="left:252.90px;top:584.04px;font-size:18.5px;line-height:18.5px;color:#3a7d22;font-weight:bold;transform:scaleX(0.9480);">Columna1</div>
<div class="t" style="left:408.60px;top:584.04px;font-size:18.5px;line-height:18.5px;color:#3a7d22;font-weight:bold;transform:scaleX(0.9251);">Con numeros</div>
<div class="t" style="left:580.20px;top:584.04px;font-size:18.5px;line-height:18.5px;color:#3a7d22;font-weight:bold;transform:scaleX(0.9330);">con variables</div>
<div class="t" style="left:252.50px;top:612.04px;font-size:18.5px;line-height:18.5px;color:#3a7d22;transform:scaleX(0.9650);">suma(+)</div>
<div class="t" style="left:553.97px;top:612.04px;font-size:18.5px;line-height:18.5px;color:#3a7d22;">14</div>
<div class="t" style="left:732.97px;top:612.04px;font-size:18.5px;line-height:18.5px;color:#3a7d22;">14</div>
<div class="t" style="left:252.50px;top:640.04px;font-size:18.5px;line-height:18.5px;color:#3a7d22;transform:scaleX(0.9650);">Resta(-)</div>
<div class="t" style="left:553.97px;top:640.04px;font-size:18.5px;line-height:18.5px;color:#3a7d22;">10</div>
<div class="t" style="left:732.97px;top:640.04px;font-size:18.5px;line-height:18.5px;color:#3a7d22;">10</div>
<div class="t" style="left:252.50px;top:668.04px;font-size:18.5px;line-height:18.5px;color:#3a7d22;transform:scaleX(1.0460);">Muitltiplicación(*)</div>
<div class="t" style="left:553.97px;top:668.04px;font-size:18.5px;line-height:18.5px;color:#3a7d22;">24</div>
<div class="t" style="left:252.50px;top:696.04px;font-size:18.5px;line-height:18.5px;color:#3a7d22;transform:scaleX(0.9650);">Bivisión(/)</div>
<div class="t" style="left:564.23px;top:696.04px;font-size:18.5px;line-height:18.5px;color:#3a7d22;">6</div>
<div class="t" style="left:252.50px;top:724.04px;font-size:18.5px;line-height:18.5px;color:#3a7d22;transform:scaleX(0.9896);">Potencia(^)</div>
<div class="t" style="left:543.61px;top:724.04px;font-size:18.5px;line-height:18.5px;color:#3a7d22;">144</div>
<div class="t" style="left:743.23px;top:724.04px;font-size:18.5px;line-height:18.5px;color:#3a7d22;">0</div>
<div class="r" style="left:908px;top:606px;width:143px;height:26px;background:#daf2d0;"></div>
<div class="r" style="left:908px;top:662px;width:143px;height:26px;background:#daf2d0;"></div>
<div class="r" style="left:908px;top:718px;width:143px;height:26px;background:#daf2d0;"></div>
<div class="t" style="left:911.80px;top:584.04px;font-size:18.5px;line-height:18.5px;color:#3a7d22;font-weight:bold;transform:scaleX(0.9368);">Operación</div>
<div class="t" style="left:1054.00px;top:584.04px;font-size:18.5px;line-height:18.5px;color:#111;transform:scaleX(0.9650);">Num2 y Num4</div>
<div class="t" style="left:1197.00px;top:584.04px;font-size:18.5px;line-height:18.5px;color:#111;transform:scaleX(0.9650);">Num2 y Num4</div>
<div class="t" style="left:1360.00px;top:584.04px;font-size:18.5px;line-height:18.5px;color:#111;transform:scaleX(0.9650);">Num1 y Num3</div>
<div class="t" style="left:912.50px;top:612.04px;font-size:18.5px;line-height:18.5px;color:#3a7d22;transform:scaleX(0.9650);">suma (+)</div>
<div class="t" style="left:1170.96px;top:612.04px;font-size:18.5px;line-height:18.5px;color:#111;">20</div>
<div class="t" style="left:1333.96px;top:612.04px;font-size:18.5px;line-height:18.5px;color:#111;">20</div>
<div class="t" style="left:1476.96px;top:612.04px;font-size:18.5px;line-height:18.5px;color:#111;">17</div>
<div class="t" style="left:915.50px;top:640.04px;font-size:18.5px;line-height:18.5px;color:#3a7d22;transform:scaleX(0.9650);">Resta(-)</div>
<div class="t" style="left:1164.77px;top:640.04px;font-size:18.5px;line-height:18.5px;color:#111;">-16</div>
<div class="t" style="left:1327.77px;top:640.04px;font-size:18.5px;line-height:18.5px;color:#111;">-16</div>
<div class="t" style="left:1487.23px;top:640.04px;font-size:18.5px;line-height:18.5px;color:#111;">7</div>
<div class="r" style="left:909px;top:660px;width:141px;height:28px;overflow:hidden">
<div class="r" style="left:-909px;top:-660px;width:1920px;height:1200px">
<div class="t" style="left:911.50px;top:668.04px;font-size:18.5px;line-height:18.5px;color:#3a7d22;transform:scaleX(1.0460);">Muitltiplicación(*)</div>
</div></div>
<div class="t" style="left:1170.96px;top:668.04px;font-size:18.5px;line-height:18.5px;color:#111;">36</div>
<div class="t" style="left:1333.96px;top:668.04px;font-size:18.5px;line-height:18.5px;color:#111;">36</div>
<div class="t" style="left:1476.96px;top:668.04px;font-size:18.5px;line-height:18.5px;color:#111;">60</div>
<div class="t" style="left:912.50px;top:696.04px;font-size:18.5px;line-height:18.5px;color:#3a7d22;transform:scaleX(0.9650);">Bivisión (/)</div>
<div class="t" style="left:1084.90px;top:696.04px;font-size:18.5px;line-height:18.5px;color:#111;transform:scaleX(1.0986);">0.111111111</div>
<div class="t" style="left:1247.90px;top:696.04px;font-size:18.5px;line-height:18.5px;color:#111;transform:scaleX(1.0986);">0.111111111</div>
<div class="t" style="left:1471.79px;top:696.04px;font-size:18.5px;line-height:18.5px;color:#111;">2.4</div>
<div class="t" style="left:912.50px;top:724.04px;font-size:18.5px;line-height:18.5px;color:#3a7d22;transform:scaleX(0.9650);">potencia(^)</div>
<div class="t" style="left:1129.80px;top:724.04px;font-size:18.5px;line-height:18.5px;color:#111;">262144</div>
<div class="t" style="left:1292.80px;top:724.04px;font-size:18.5px;line-height:18.5px;color:#111;">262144</div>
<div class="t" style="left:1435.80px;top:724.04px;font-size:18.5px;line-height:18.5px;color:#111;">248832</div>
<div class="r" style="left:907px;top:576px;width:594px;height:2px;background:#444444;"></div>
<div class="r" style="left:907px;top:604px;width:594px;height:2px;background:#444444;"></div>
<div class="r" style="left:907px;top:632px;width:594px;height:2px;background:#444444;"></div>
<div class="r" style="left:907px;top:660px;width:594px;height:2px;background:#444444;"></div>
<div class="r" style="left:907px;top:688px;width:594px;height:2px;background:#444444;"></div>
<div class="r" style="left:907px;top:716px;width:594px;height:2px;background:#444444;"></div>
<div class="r" style="left:907px;top:744px;width:594px;height:2px;background:#444444;"></div>
<div class="r" style="left:907px;top:576px;width:2px;height:170px;background:#444444;"></div>
<div class="r" style="left:1050px;top:576px;width:2px;height:170px;background:#444444;"></div>
<div class="r" style="left:1193px;top:576px;width:2px;height:170px;background:#444444;"></div>
<div class="r" style="left:1356px;top:576px;width:2px;height:170px;background:#444444;"></div>
<div class="r" style="left:1499px;top:576px;width:2px;height:170px;background:#444444;"></div>
<svg class="r" style="left:1560px;top:970px" width="150" height="80" viewBox="1560 970 150 80">
<circle cx="1587.5" cy="996.5" r="19.5" fill="#fff"/>
<circle cx="1676.5" cy="1025.5" r="19.5" fill="#fff"/>
<path d="M1607 996.5 H1676.5 V1005.5 M1587.8 1015.5 V1025.3 H1656.5" fill="none" stroke="#217346" stroke-width="3"/>
<circle cx="1587.5" cy="996.5" r="16" fill="#fff" stroke="#217346" stroke-width="2.8"/>
<circle cx="1676.5" cy="1025.5" r="16" fill="#fff" stroke="#217346" stroke-width="2.8"/>
</svg>
<div class="r" style="left:58px;top:996px;width:3px;height:30px;background:#217346;"></div>
<div class="r" style="left:1588px;top:323px;width:88px;height:3px;background:#217346;"></div>
<div class="r" style="left:0px;top:1065px;width:1920px;height:3px;background:#e3e3e3;"></div>
<div class="r" style="left:0px;top:1068px;width:1920px;height:60px;background:#f3f3f3;"></div>
<div class="r" style="left:76px;top:1067px;width:152px;height:61px;background:#ffffff;"></div>
<div class="r" style="left:227px;top:1068px;width:2px;height:60px;background:#e0e0e0;"></div>
<div class="r" style="left:26.5px;top:1091.3px;width:20.5px;height:3.4px;background:#444;"></div>
<div class="r" style="left:35px;top:1083px;width:3.4px;height:20.5px;background:#444;"></div>
<div class="t" style="left:121.50px;top:1084.69px;font-size:26px;line-height:26px;color:#222;transform:scaleX(0.8575);">Hoja1</div>
<div class="r" style="left:0px;top:1128px;width:1920px;height:72px;background:#f6f6f6;"></div>
<svg class="r" style="left:110px;top:1145px" width="40" height="40" viewBox="110 1145 40 40">
<g fill="#666"><circle cx="119.7" cy="1154.3" r="2.2"/><circle cx="119.7" cy="1163.8999999999999" r="2.2"/><circle cx="119.7" cy="1173.5" r="2.2"/><circle cx="129.1" cy="1154.3" r="2.2"/><circle cx="129.1" cy="1163.8999999999999" r="2.2"/><circle cx="129.1" cy="1173.5" r="2.2"/><circle cx="138.5" cy="1154.3" r="2.2"/><circle cx="138.5" cy="1163.8999999999999" r="2.2"/><circle cx="138.5" cy="1173.5" r="2.2"/></g></svg>
<svg class="r" style="left:1490px;top:1140px" width="320" height="50" viewBox="1490 1140 320 50">
<g fill="none" stroke="#555" stroke-width="2.3" stroke-linecap="round">
<path d="M1500.5 1153 V1173 M1510.5 1153 V1173 M1520.5 1153 V1173"/>
<rect x="1637.5" y="1152.5" width="22" height="22" rx="6"/>
<path d="M1792.5 1152.5 L1780 1163.5 L1792.5 1174.5"/>
</g></svg>
<svg class="r" style="left:690px;top:1128px" width="560" height="72" viewBox="690 1128 560 72">
<defs>
<clipPath id="sq1"><rect x="698" y="1140" width="47" height="47" rx="18"/></clipPath>
</defs>
<rect x="698" y="1140" width="47" height="47" rx="18" fill="#fff"/>
<circle cx="721.5" cy="1163.5" r="17" fill="#db4437"/>
<path d="M721.5 1163.5 L706.8 1155 A17 17 0 0 0 721.5 1180.5 Z" fill="#0f9d58"/>
<path d="M721.5 1163.5 L721.5 1180.5 A17 17 0 0 0 738.5 1163.5 L736.2 1155 Z" fill="#f4b400"/>
<circle cx="721.5" cy="1163.5" r="8" fill="#fff"/><circle cx="721.5" cy="1163.5" r="6.2" fill="#4285f4"/>
<rect x="726" y="1133.8" width="30" height="24.6" rx="11" fill="#e85d1c"/>
<text x="741.2" y="1152" font-family="Liberation Sans" font-size="15.5" fill="#fff" text-anchor="middle">25</text>
<rect x="777" y="1140" width="47" height="47" rx="18" fill="#f6a313"/>
<path d="M786 1152 Q786 1150 788 1150 H797 L800 1153 H811 Q813 1153 813 1155 V1174 Q813 1176 811 1176 H788 Q786 1176 786 1174Z" fill="#fff"/>
<rect x="856" y="1140" width="47" height="47" rx="18" fill="#0b82a6"/>
<rect x="866.5" y="1150" width="26" height="27" rx="4" fill="#fff"/>
<rect x="870" y="1147" width="3.5" height="5" fill="#fff"/><rect x="885.5" y="1147" width="3.5" height="5" fill="#fff"/>
<text x="879.5" y="1172" font-family="Liberation Sans" font-weight="bold" font-size="17" fill="#0b5f7a" text-anchor="middle">1</text>
<rect x="935" y="1140" width="47" height="47" rx="18" fill="#fff"/>
<rect x="942.5" y="1148.5" width="32.5" height="21.5" rx="10" fill="#7fa8f5"/>
<rect x="942.5" y="1153.3" width="29.5" height="14.5" rx="7.2" fill="#0b57d0"/>
<path d="M949 1166 L958.6 1179 V1166 Z" fill="#4b82ea"/>
<rect x="1014" y="1140" width="47" height="47" rx="18" fill="#f4604c"/>
<circle cx="1037.5" cy="1155" r="5.4" fill="#fde3dc"/>
<path d="M1025.8 1170 Q1030 1162.5 1037.5 1162.5 Q1045 1162.5 1049.2 1170 Q1045 1177.5 1037.5 1177.5 Q1030 1177.5 1025.8 1170Z" fill="#fff6ef"/>
<rect x="1093" y="1140" width="47" height="47" rx="18" fill="#e9245a"/>
<rect x="1101.7" y="1152.5" width="29.1" height="21.7" rx="4.5" fill="#fff"/>
<circle cx="1115.8" cy="1163.3" r="4.8" fill="#c0073a"/><circle cx="1124.5" cy="1157.6" r="2.2" fill="#e8456b"/>
<rect x="1163" y="1148" width="2" height="28" fill="#a0a0a0"/>
<rect x="1186" y="1140" width="47" height="47" rx="18" fill="#fff"/>
<path d="M1198.47 1156.09 A13.6 13.6 0 0 1 1220.11 1154.20" fill="none" stroke="#ea4335" stroke-width="6.4"/><path d="M1198.47 1170.51 A13.6 13.6 0 0 1 1198.73 1155.69" fill="none" stroke="#fbbc05" stroke-width="6.4"/><path d="M1221.78 1170.10 A13.6 13.6 0 0 1 1198.22 1170.10" fill="none" stroke="#34a853" stroke-width="6.4"/><path d="M1223.60 1163.06 A13.6 13.6 0 0 1 1221.53 1170.51" fill="none" stroke="#4285f4" stroke-width="6.4"/><rect x="1210.5" y="1160.1" width="16.6" height="6.2" fill="#4285f4"/>
</svg>
</body></html>
